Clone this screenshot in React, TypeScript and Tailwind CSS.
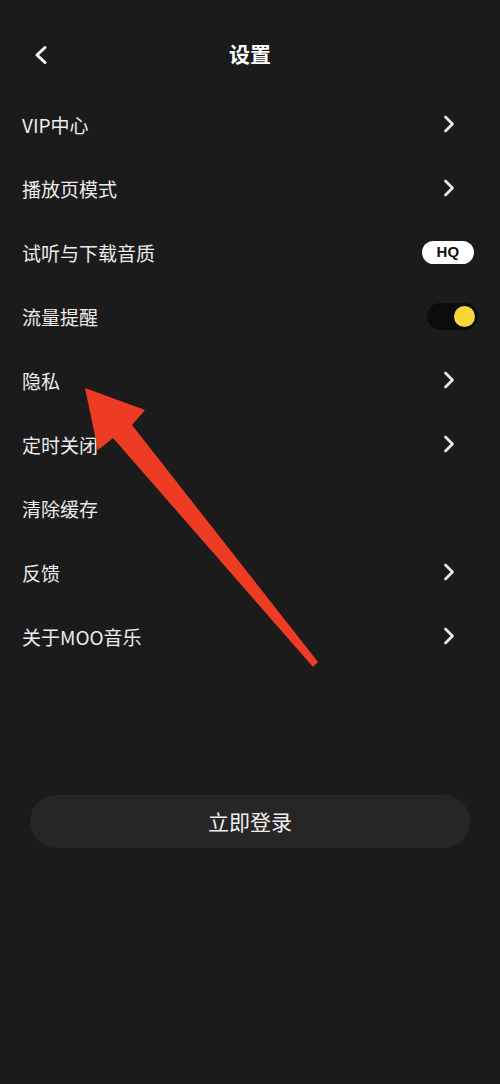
import React from "react";

const font = { fontFamily: '"Noto Sans CJK SC", "Noto Sans", sans-serif' };

function Chevron() {
  return (
    <svg width="14" height="20" viewBox="0 0 14 20" className="shrink-0">
      <path d="M3.5 3 L10.5 10 L3.5 17" fill="none" stroke="#e6e6e6" strokeWidth="2.8" strokeLinecap="round" strokeLinejoin="round" />
    </svg>
  );
}

type Row = { label: string; right: "chevron" | "hq" | "toggle" | "none" };

const rows: Row[] = [
  { label: "VIP中心", right: "chevron" },
  { label: "播放页模式", right: "chevron" },
  { label: "试听与下载音质", right: "hq" },
  { label: "流量提醒", right: "toggle" },
  { label: "隐私", right: "chevron" },
  { label: "定时关闭", right: "chevron" },
  { label: "清除缓存", right: "none" },
  { label: "反馈", right: "chevron" },
  { label: "关于MOO音乐", right: "chevron" },
];

export default function App() {
  return (
    <div className="relative w-[500px] h-[1084px] bg-[#1b1b1b] text-[#ececec] overflow-hidden" style={font}>
      {/* Header */}
      <div className="relative h-[108px] flex items-start pt-[33px] justify-center">
        <div className="absolute left-[32px] top-[44px]">
          <svg width="18" height="22" viewBox="0 0 18 22">
            <path d="M13 3.5 L5 11 L13 18.5" fill="none" stroke="#ffffff" strokeWidth="3" strokeLinecap="round" strokeLinejoin="round" />
          </svg>
        </div>
        <div className="text-[21px] font-bold text-white leading-[40px]">设置</div>
      </div>

      {/* List */}
      <div className="flex flex-col -mt-[16px]">
        {rows.map((r) => (
          <div key={r.label} className="h-[64px] flex items-center justify-between pl-[22px] pr-[22px]">
            <span className="text-[19px] leading-none">{r.label}</span>
            {r.right === "chevron" && (
              <div className="pr-[22px]">
                <Chevron />
              </div>
            )}
            {r.right === "hq" && (
              <div className="mr-[4px] w-[52px] h-[23px] rounded-full bg-white flex items-center justify-center text-[15px] font-extrabold text-[#111] tracking-[0.3px]" style={{ fontFamily: '"Liberation Sans", Arial, sans-serif' }}>
                HQ
              </div>
            )}
            {r.right === "toggle" && (
              <div className="w-[51px] h-[27px] rounded-full bg-[#0c0c0c] flex items-center justify-end pr-[3px]">
                <div className="w-[21px] h-[21px] rounded-full bg-[#f6d83a]" />
              </div>
            )}
          </div>
        ))}
      </div>

      {/* Login button */}
      <div className="px-[30px] mt-[127px]">
        <div className="h-[53px] rounded-full bg-[#262626] flex items-center justify-center text-[21px] text-[#f0f0f0]">
          立即登录
        </div>
      </div>

      {/* Red arrow annotation */}
      <svg className="absolute left-0 top-0 pointer-events-none" width="500" height="1084" viewBox="0 0 500 1084">
        <polygon
          points="85,388 145,410 132,425 318,662 313,667 113,438 98,450"
          fill="#ee3b23"
          strokeLinejoin="round"
        />
      </svg>
    </div>
  );
}
